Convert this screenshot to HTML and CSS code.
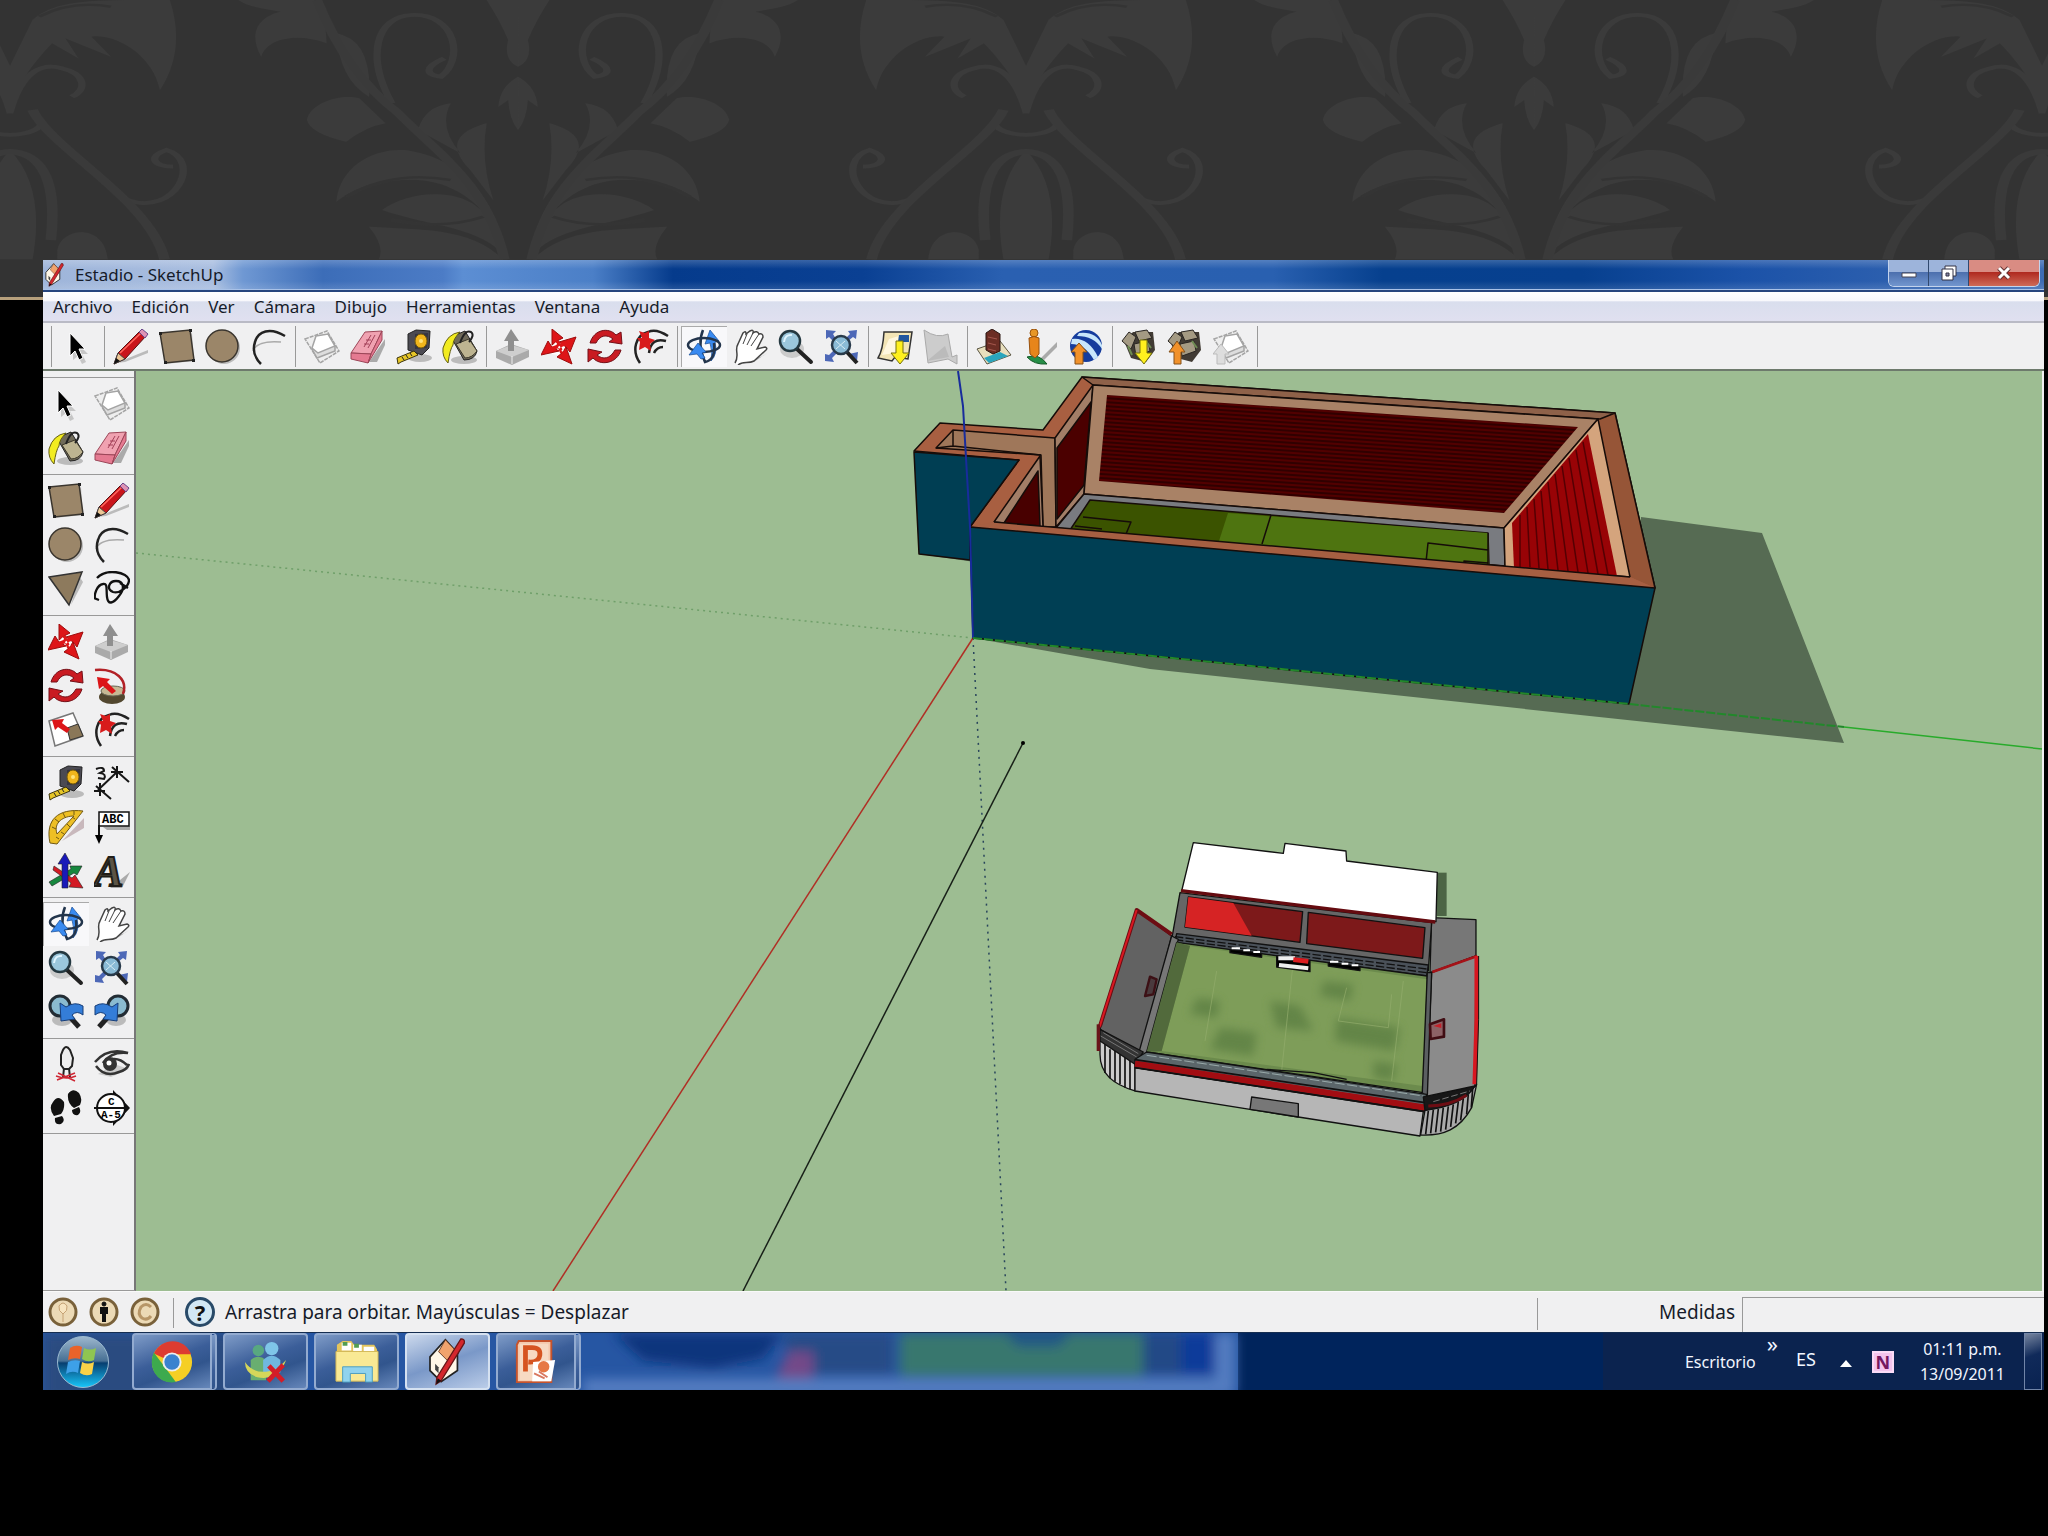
FILE: index.html
```html
<!DOCTYPE html>
<html lang="es">
<head>
<meta charset="utf-8">
<meta name="viewport" content="width=device-width, initial-scale=1">
<title>Estadio - SketchUp</title>
<link rel="stylesheet" href="styles.css">
</head>
<body>
<svg class="defs" aria-hidden="true">
<defs>
<symbol id="select" viewBox="0 0 36 36"><path d="M13 10v21l5-4 4 8 4-2-4-8h6z" fill="#aaa" opacity=".6"/><path d="M10 4v23l5-5 4 9 4-2-4-9h6z" fill="#000" stroke="#fff"/></symbol>
<symbol id="component" viewBox="0 0 36 36" fill="#fff" stroke="#a4a4a4" stroke-width="1.5"><path d="M1 10 23 2l12 20-19 12z" fill="#eee" stroke-dasharray="4 1"/><path d="m8 20 5 9 18-7v-6" fill="#ddd"/><path d="m12 7 12-2 7 12-17 7-6-5z"/></symbol>
<symbol id="bucket" viewBox="0 0 36 36"><ellipse cx="22" cy="31" rx="13" ry="4" fill="#bbb"/><path d="m9 8 14-6 12 20q-2 9-13 9z" fill="#6f6a59" stroke="#222"/><path d="m14 15 13-5 8 12q-5 7-12 7z" fill="#bdb491" stroke="#3b372b"/><path d="M1 19Q5 5 18 3q-7 7-7 13-3 4-5 18-6-6-5-15z" fill="#f2ec20" stroke="#645f14"/><path d="M18 14Q23 0 29 3q4 3-2 10" fill="none" stroke="#222" stroke-width="2"/></symbol>
<symbol id="eraser" viewBox="0 0 36 36"><path d="M19 33h8l8-17v-6z" fill="#aaa"/><path d="M1 24 15 3l17-1-11 23z" fill="#f0a2b1" stroke="#9c4658"/><path d="m1 24 20 1-3 9L1 30zM21 25 32 2v9L18 34z" fill="#e57a91" stroke="#9c4658"/><path d="m14 18 7-12m-3 13 7-13m-9 5h5m-7 4h5" stroke="#a24058" fill="none"/></symbol>
<symbol id="rectangle" viewBox="0 0 36 36"><path d="m7 35 28-3-2-28z" fill="#c4c4c4"/><path d="m1 4 30-3 4 30-29 3z" fill="#9b8669" stroke="#3a352e" stroke-width="1.5"/><path d="M0 3h3v3H0zM30 0h3v3h-3zM33 30h3v3h-3zM5 32h3v3H5z" fill="#222"/></symbol>
<symbol id="pencil" viewBox="0 0 36 36"><path d="m3 34 32-13v3L12 33z" fill="#bbb"/><path d="m1 35 4-11L27 2l6 5-21 23z" fill="#c9151b" stroke="#511"/><path d="M7 24 28 4" stroke="#ff6a60" stroke-width="1.5"/><path d="m1 35 4-11 7 6z" fill="#edc795" stroke="#444"/><path d="m1 35 2-6 4 3z" fill="#111"/><path d="m26 3 3-3 6 5-3 4z" fill="#df93b4" stroke="#648"/></symbol>
<symbol id="circle" viewBox="0 0 36 36"><circle cx="19" cy="19" r="16" fill="#bbb"/><circle cx="17" cy="17" r="16" fill="#9b8669" stroke="#3a352e" stroke-width="1.5"/></symbol>
<symbol id="arc" viewBox="0 0 36 36" fill="none"><path d="M2 22q4-11 28-9" stroke="#aaa" stroke-width="1.5"/><path d="M34 7C19-2 7 2 4 13c-3 9 0 16 6 22" stroke="#222" stroke-width="2.5"/></symbol>
<symbol id="polygon" viewBox="0 0 36 36"><path d="m23 34 12-23-4-6z" fill="#bbb"/><path d="m1 6 33-5-13 33z" fill="#8d7a5d" stroke="#333" stroke-width="1.5"/></symbol>
<symbol id="freehand" viewBox="0 0 36 36"><path d="M3 7C12-3 34 1 35 9c0 7-10 14-16 12-7-3-4-11 3-11 8 0 9 8 3 15-6 8-11 9-12 1-1-8 1-14-4-13-6 1-9 10-8 15m-1-1 5 2m21-17 8 5" fill="none" stroke="#111" stroke-width="2.3"/></symbol>
<symbol id="move" viewBox="0 0 36 36"><path d="m12 9 12 1 3 13-4 4-12-2-2-9z" fill="#fff"/><path d="m11 0 11 9-6 3-5 4zM35 8l-6 15-4-5-7-5zM31 35 16 28l5-4 4-6zM0 26l7-14 4 6 7 4z" fill="#de1518" stroke="#9c0c0c"/><path d="m16 12 5 12M10 20l16-6" stroke="#de1518" stroke-width="3.500"/><path d="m14 14 8 8" stroke="#fff" stroke-width="2" stroke-dasharray="2 3"/></symbol>
<symbol id="pushpull" viewBox="0 0 36 36"><path d="m1 22 15-7 18 6v7L17 36 1 29z" fill="#aaa"/><path d="m1 22 15-6 18 5-17 7z" fill="#cecece"/><path d="M17 27v8" stroke="#eee"/><path d="m16 0 8 12h-5v10h-6V12H9z" fill="#8f8f8f"/></symbol>
<symbol id="rotate" viewBox="0 0 36 36"><path d="M3 14C7 0 22-2 29 6l5-3 1 12-13-2 4-3c-6-5-13-4-17 4zM34 21c-4 14-21 16-28 8l-5 4V20l14 3-5 3c6 5 13 4 18-5z" fill="#c91b22" stroke="#731018"/></symbol>
<symbol id="followme" viewBox="0 0 36 36"><ellipse cx="18" cy="29" rx="13" ry="7" fill="#52472f"/><ellipse cx="19" cy="23" rx="12" ry="5" fill="#c6b894" stroke="#665"/><path d="M1 2C22 0 34 12 29 26" fill="none" stroke="#b22126" stroke-width="2.5"/><path d="m3 9 13 2-3 3 9 9-4 3-9-8-4 3z" fill="#dc1518"/></symbol>
<symbol id="scale" viewBox="0 0 36 36"><path d="M1 9 25 1l10 23L7 34z" fill="#fff" stroke="#777" stroke-width="1.5"/><path d="m19 16 11-4 5 12-13 4z" fill="#8a7758" stroke="#333"/><path d="m4 8 12-1-2 4 8 6-3 4-9-6-3 3z" fill="#dc1518"/></symbol>
<symbol id="offset" viewBox="0 0 36 36"><g fill="none" stroke="#222" stroke-width="2.5"><path d="M35 7Q23-1 15 3C3 6-2 21 7 34M33 12Q18 8 16 24m14-6q-6 0-9 6"/></g><path d="m6 2 6 2 4-2v7l6 2-5 4 1 7-6-4-6 3 1-8-3-4h5z" fill="#d81b1b"/></symbol>
<symbol id="tape" viewBox="0 0 36 36"><ellipse cx="24" cy="29" rx="12" ry="4" fill="#bbb"/><path d="m12 5 8-4 14 1-1 17-7 7-14-5z" fill="#4b4a52" stroke="#222"/><path d="m19 5 13-1-1 15-12 1z" fill="#353540"/><ellipse cx="25" cy="12" rx="6" ry="7" fill="#f0b51c" stroke="#765a08"/><circle cx="25" cy="12" r="2" fill="#ffe37a"/><path d="m1 29 17-7 4 4-17 7-3 2z" fill="#e6c627" stroke="#3b330c"/><path d="m6 28 2 3m2-5 2 3m2-5 2 3" stroke="#222"/></symbol>
<symbol id="dimension" viewBox="0 0 36 36" fill="none" stroke="#161616" stroke-width="2"><path d="m4 25 19-18M2 21l15 13M18 2l17 15M23 1v12M6 18v13M17 7h12M0 26h11M2 4q8-3 8 2L6 8q7 1 4 6l-6-1"/></symbol>
<symbol id="protractor" viewBox="0 0 36 36"><path d="m14 32 22-23v10z" fill="#c8b8bc"/><path d="M35 2C10-1-3 11 2 34l7 1zM26 7 9 25C5 13 16 7 26 7z" fill="#edbf25" stroke="#715914" fill-rule="evenodd"/><path d="m4 18 4 2M7 10l4 3m4-9 2 4m9-6v4M11 30l-3-2m8-3-3-2m9-5-3-3m8-5-3-2" stroke="#715914"/></symbol>
<symbol id="textlabel" viewBox="0 0 36 36"><path d="m9 18 27-1v4H13z" fill="#aaa"/><path d="M5 3h30v14H5z" fill="#fff" stroke="#111" stroke-width="1.5"/><path d="M5 16v13" stroke="#111" stroke-width="2"/><path d="m1 26 8 0-4 9z"/><text x="8" y="14" font-family="Liberation Mono" font-size="12" font-weight="700">ABC</text></symbol>
<symbol id="axes" viewBox="0 0 36 36" stroke="#222" stroke-width=".6"><path d="m1 29 22-13-1-3 12 0-5 9-3-2L4 33z" fill="#16873e"/><path d="m6 13 18 12 3-3 8 13-14-1 2-4L5 17z" fill="#d31a23"/><path d="M17 0 23 11h-3v24h-6V11h-4z" fill="#1919b9"/></symbol>
<symbol id="text3d" viewBox="0 0 36 36"><path d="m16 35 20-16-8 16z" fill="#aaa"/><text x="0" y="33" font-family="Liberation Serif" font-size="44" font-weight="700" font-style="italic" fill="#5b5445" stroke="#211e19" stroke-width="2">A</text></symbol>
<symbol id="orbit" viewBox="0 0 36 36"><path d="m24 1 9 11-4 1q3 12-4 19 2-9-1-18l-5 1z" fill="#398af0" stroke="#164b94" stroke-width=".7"/><g fill="none" stroke="#23354c" stroke-width="2.5"><ellipse cx="18" cy="16" rx="16" ry="7"/><path d="M17 1q-6 14 2 32 11-2 9-19"/></g><path d="m3 26 9-12 8 9-4 1 3 5-4 1-4-5z" fill="#398af0" stroke="#164b94" stroke-width=".7"/></symbol>
<symbol id="pan" viewBox="0 0 36 36"><path d="M9 34 22 33 35 24l-4 3z" fill="#aaa"/><path d="M3 34c5-8-1-13 3-19L11 4q3-3 3 1L18 2q4-2 3 2 4-3 6 1 4-1 4 3l-6 12 8-2q3 1 1 3L22 32c-6 3-11 0-16 4" fill="#fff" stroke="#444" stroke-width="1.5"/><path d="m11 15 4-10m0 11 6-12m-2 13 8-12" stroke="#444" fill="none"/></symbol>
<symbol id="zoom" viewBox="0 0 36 36"><ellipse cx="14" cy="20" rx="12" ry="9" fill="#bbb" opacity=".7"/><path d="m19 20 14 13" stroke="#222" stroke-width="4" stroke-linecap="round"/><circle cx="12" cy="12" r="10" fill="#9bc7dc" stroke="#243840" stroke-width="2.5"/><path d="M6 13q1-8 8-7" stroke="#dff5ff" stroke-width="2" fill="none"/></symbol>
<symbol id="extents" viewBox="0 0 36 36"><path d="m2 1 10 1-3 3 3 5-3 2-4-4-3 2zM24 2l9-1-1 9-3-2-5 4-2-3 4-4zM1 25l4 1 5-5 3 3-5 5 2 4-9-1zM25 25l9-2-1 9z" fill="#4d68b7"/><path d="m22 22 11 12" stroke="#222" stroke-width="4"/><circle cx="17" cy="16" r="9" fill="#8abbd6" stroke="#283a4a" stroke-width="2.5"/><path d="m12 12 9 8m0-8-9 8" stroke="#d7edf5"/></symbol>
<symbol id="previous" viewBox="0 0 36 36"><ellipse cx="14" cy="26" rx="10" ry="6" fill="#bbb"/><path d="m22 23 9 10" stroke="#222" stroke-width="5"/><circle cx="12" cy="12" r="10" fill="#8abbd0" stroke="#222c34" stroke-width="3"/><path d="m13 27-1-18 6 4q9-6 17-1v9q-6-5-11 0l3 4z" fill="#347dd8" stroke="#173e79"/></symbol>
<symbol id="getmap" viewBox="0 0 36 36"><path d="M7 3h28l-4 27-13-2-3 4-14-3q5-8 6-26z" fill="#f3e5b6" stroke="#333" stroke-width="1.500"/><path d="m12 10 10-3-4 17-13 2z" fill="#fff7df"/><path d="M22 6h10v7H21z" fill="#21569e"/><path d="M19 12h7v12h6l-9 11-9-11h5z" fill="#fff01e" stroke="#76720c"/></symbol>
<symbol id="terrain" viewBox="0 0 36 36"><path d="M1 1q13 9 24 4l4 23 5-2v9l-9-5-20 4z" fill="#ccc" stroke="#aaa"/><path d="m4 32 18-15 4 11z" fill="#bbb"/></symbol>
<symbol id="building" viewBox="0 0 36 36"><path d="m1 20 23-8 11 14-24 9z" fill="#e8dfbd" stroke="#5a5542"/><path d="m8 29 16-6 8 4-19 7z" fill="#29a5bd"/><path d="m10 4 6-4 8 5v17l-7 3-7-4z" fill="#6b2d24" stroke="#291510"/><path d="m12 8 9 2m-9 4 8 2m-8 4 8 2" stroke="#a5574d"/></symbol>
<symbol id="person" viewBox="0 0 36 36"><path d="M19 29 35 13v5L22 31z" fill="#aaa"/><path d="M5 28q12-4 20 7-13 1-20-7z" fill="#268e47" stroke="#145b28"/><circle cx="12" cy="4" r="4" fill="#e79625" stroke="#9a530d"/><path d="M7 9q5-3 10 0v16l-4 4-5-4z" fill="#e7851b" stroke="#97500e"/></symbol>
<symbol id="earth" viewBox="0 0 36 36"><circle cx="18" cy="17" r="16" fill="#153c9d"/><path d="M4 10Q20 8 30 28l-4 3Q17 15 3 15zM11 4q17-2 23 12v4Q26 7 9 7z" fill="#c8e6fb"/><path d="m11 14 8 9h-4v12H7V23H3z" fill="#f1912a" stroke="#83501a"/></symbol>
<symbol id="warehouse" viewBox="0 0 36 36"><path d="m3 12 9-9 20 0 2 18-9 12-15-4z" fill="#413b34"/><path d="m1 12 7-9 7 5-5 12zM14 3l12-2 5 8-13 3zM13 15l14-3 2 10-14 5z" fill="#a49a83" stroke="#292522"/><path d="m7 17 4 9m14-14 5 7" stroke="#6e8b52" stroke-width="2"/></symbol>
<symbol id="getmodels" viewBox="0 0 36 36"><use href="#warehouse"/><path d="M19 11h7v13h5l-8 11-9-11h5z" fill="#fff01e" stroke="#76720c"/></symbol>
<symbol id="sharemodel" viewBox="0 0 36 36"><use href="#warehouse"/><path d="m10 12 8 11h-4v12H7V23H2z" fill="#f1912a" stroke="#83501a"/></symbol>
<symbol id="sharecomponent" viewBox="0 0 36 36"><use href="#component"/><path d="m8 15 8 10h-4v10H4V25H0z" fill="#ddd" stroke="#bbb"/></symbol>
<symbol id="camera" viewBox="0 0 36 36"><path d="M15 4q3-6 7 0l3 8-1 8-3 3h-5l-3-4V9z" fill="#eee" stroke="#222" stroke-width="2"/><path d="m16 22-1 10m6-10 1 10" stroke="#222" stroke-width="2"/><path d="m10 27 17 8M27 27 9 34M8 30q11 4 20 0" fill="none" stroke="#ce2533" stroke-width="1.5"/></symbol>
<symbol id="look" viewBox="0 0 36 36"><path d="M4 28 17 31 35 23 20 18z" fill="#ccc"/><path d="M1 16Q14 1 34 7q-17-2-25 10 13-9 24 2M2 20q9 12 23 6 8-2 10-8" fill="none" stroke="#333" stroke-width="2.5"/><circle cx="16" cy="18" r="7" fill="#333"/><circle cx="15" cy="17" r="2.5" fill="#fff"/></symbol>
<symbol id="walk" viewBox="0 0 36 36" fill="#111"><path d="M5 12q5-8 11 0 1 7-3 12l-7 2Q0 18 5 12zM7 28l7-2q4 5-1 8-7 1-6-6zM20 4q5-7 11-1 4 6 1 12l-6 3q-7-5-6-14zM24 20l7-3q3 5-1 8-6 1-6-5z"/></symbol>
<symbol id="section" viewBox="0 0 36 36"><path d="M19 0 36 18 19 36z" fill="#111"/><circle cx="17" cy="18" r="14" fill="#fff" stroke="#111" stroke-width="2"/><path d="M0 18h34" stroke="#111" stroke-width="2"/><g font-family="Liberation Mono" font-size="11" font-weight="700"><text x="14" y="15">C</text><text x="7" y="28">A-5</text></g></symbol>
<symbol id="house" viewBox="0 0 46 56"><path d="m2 22 18-20 14 16v20L15 51 2 38z" fill="#fff7e8" stroke="#222" stroke-width="2"/><path d="M20 2 35 18 26 30 12 16z" fill="#f1a36d" stroke="#583120"/><path d="m8 30 4 4v7l-4-4z" fill="#444"/><path d="M38 1q5 0 4 5L15 50l-6 4 1-8z" fill="#d4272d" stroke="#651618" stroke-width="1.5"/><path d="m9 54 2-7 4 3z" fill="#111"/></symbol>
<pattern id="damask" x="10" y="0" width="1016" height="300" patternUnits="userSpaceOnUse">
<g transform="scale(.6534 .3333) translate(-15.5 0)"><g id="half" fill="#3b3b3b" stroke="none">
<path d="M515 100Q570 120 565 290 520 240 515 100zM365 0H480Q500 60 500 130C460 100 410 110 400 170 380 100 395 50 430 35 400 25 380 20 365 0zM470 360C475 310 520 280 550 295L590 370Q560 380 530 425 475 400 470 360zM515 605C520 500 570 445 620 450 690 470 740 550 765 690 730 600 690 545 640 540 570 535 540 570 515 605zM585 630C620 580 690 560 730 620 760 670 770 700 775 775 740 680 660 680 585 630zM565 680C640 690 720 680 770 778H580Q590 740 565 680zM640 390Q650 320 690 310 670 380 705 460zM745 370C690 400 690 450 720 510L755 600Q735 480 745 370zM745 0H793V200Q770 180 778 120 765 60 745 0zM793 230Q765 260 763 320L778 300Q780 360 793 390zM50 60C80 10 120 0 210 0H260Q285 150 245 270C235 170 180 100 140 110L170 170 100 115 120 175 80 130C60 170 20 260 15 340V200Q30 140 50 60zM15 450Q70 560 50 778H15zM88 750C95 680 160 670 165 778H88z"/>
<path d="M600 310C560 170 575 50 630 45 700 40 710 180 675 230 650 225 650 200 680 175M15 340C35 200 70 190 95 205 130 220 135 270 110 290M15 405Q60 400 65 365M195 600C270 650 310 480 255 450 225 470 235 500 265 500" fill="none" stroke="#3b3b3b" stroke-width="11"/>
<path d="M485 0C510 120 550 250 610 340 670 460 745 550 772 778M50 330C80 450 230 600 252 778M15 455C80 460 85 600 78 720" fill="none" stroke="#3a3a3a" stroke-width="16"/><path d="M60 50Q110 0 170 20M530 590Q600 510 690 540M600 660Q680 690 740 650" fill="none" stroke="#343434" stroke-width="8"/></g>
<use href="#half" transform="translate(1586 0) scale(-1 1)"/></g>
</pattern>
<pattern id="rows" width="40" height="8" patternUnits="userSpaceOnUse" patternTransform="rotate(3.9)"><path d="M0 0h40v8H0z" fill="#520000"/><path d="M0 1h40M0 5h40" stroke="#300000" stroke-width="2"/></pattern>
<filter id="soft"><feGaussianBlur stdDeviation="6"/></filter>
<filter id="grass"><feGaussianBlur stdDeviation="14"/></filter>
</defs>
</svg>

<div class="slide">
<div class="wallpaper" aria-hidden="true"><svg><rect width="100%" height="300" fill="#333"/><rect width="100%" height="300" fill="url(#damask)"/></svg></div>

<main class="desktop">
<section class="window">
<header class="titlebar">
<svg class="title-icon" viewBox="0 0 46 56"><use href="#house"/></svg>
<h1>Estadio - SketchUp</h1>
<div class="controls">
<button aria-label="Minimizar"><svg viewBox="0 0 20 16"><path d="M3 8h14v4H3z" fill="#fff" stroke="#445"/></svg></button>
<button aria-label="Restaurar"><svg viewBox="0 0 20 16"><path d="M6 1h11v10H6z" fill="#fff" stroke="#334"/><path d="M3 4h11v11H3z" fill="#fff" stroke="#334"/><path d="M7 8h3v3H7z" fill="#88a" stroke="#334"/></svg></button>
<button class="close" aria-label="Cerrar"><svg viewBox="0 0 20 16"><path d="m5 3 10 10M15 3 5 13" stroke="#633" stroke-width="5"/><path d="m5 3 10 10M15 3 5 13" stroke="#fff" stroke-width="3"/></svg></button>
</div>
</header>
<nav class="menu"><button>Archivo</button><button>Edición</button><button>Ver</button><button>Cámara</button><button>Dibujo</button><button>Herramientas</button><button>Ventana</button><button>Ayuda</button></nav>
<div class="toolbar">
<div class="group"><button aria-label="Seleccionar"><svg><use href="#select"/></svg></button></div>
<div class="group"><button aria-label="Línea"><svg><use href="#pencil"/></svg></button><button aria-label="Rectángulo"><svg><use href="#rectangle"/></svg></button><button aria-label="Círculo"><svg><use href="#circle"/></svg></button><button aria-label="Arco"><svg><use href="#arc"/></svg></button></div>
<div class="group"><button aria-label="Crear componente"><svg><use href="#component"/></svg></button><button aria-label="Borrar"><svg><use href="#eraser"/></svg></button><button aria-label="Medir"><svg><use href="#tape"/></svg></button><button aria-label="Pintar"><svg><use href="#bucket"/></svg></button></div>
<div class="group"><button aria-label="Empujar/tirar"><svg><use href="#pushpull"/></svg></button><button aria-label="Mover"><svg><use href="#move"/></svg></button><button aria-label="Rotar"><svg><use href="#rotate"/></svg></button><button aria-label="Equidistancia"><svg><use href="#offset"/></svg></button></div>
<div class="group"><button class="active" aria-label="Orbitar"><svg><use href="#orbit"/></svg></button><button aria-label="Desplazar"><svg><use href="#pan"/></svg></button><button aria-label="Zoom"><svg><use href="#zoom"/></svg></button><button aria-label="Ver modelo"><svg><use href="#extents"/></svg></button></div>
<div class="group"><button aria-label="Obtener vista"><svg><use href="#getmap"/></svg></button><button aria-label="Terreno"><svg><use href="#terrain"/></svg></button></div>
<div class="group"><button aria-label="Añadir edificio"><svg><use href="#building"/></svg></button><button aria-label="Texturas"><svg><use href="#person"/></svg></button><button aria-label="Google Earth"><svg><use href="#earth"/></svg></button></div>
<div class="group"><button aria-label="Obtener modelos"><svg><use href="#getmodels"/></svg></button><button aria-label="Compartir modelo"><svg><use href="#sharemodel"/></svg></button><button aria-label="Compartir componente"><svg><use href="#sharecomponent"/></svg></button></div>
</div>

<div class="workspace">
<aside class="palette">
<div class="tools"><button aria-label="Seleccionar"><svg><use href="#select"/></svg></button><button aria-label="Crear componente"><svg><use href="#component"/></svg></button><button aria-label="Pintar"><svg><use href="#bucket"/></svg></button><button aria-label="Borrar"><svg><use href="#eraser"/></svg></button></div>
<div class="tools"><button aria-label="Rectángulo"><svg><use href="#rectangle"/></svg></button><button aria-label="Línea"><svg><use href="#pencil"/></svg></button><button aria-label="Círculo"><svg><use href="#circle"/></svg></button><button aria-label="Arco"><svg><use href="#arc"/></svg></button><button aria-label="Polígono"><svg><use href="#polygon"/></svg></button><button aria-label="A mano alzada"><svg><use href="#freehand"/></svg></button></div>
<div class="tools"><button aria-label="Mover"><svg><use href="#move"/></svg></button><button aria-label="Empujar/tirar"><svg><use href="#pushpull"/></svg></button><button aria-label="Rotar"><svg><use href="#rotate"/></svg></button><button aria-label="Sígueme"><svg><use href="#followme"/></svg></button><button aria-label="Escala"><svg><use href="#scale"/></svg></button><button aria-label="Equidistancia"><svg><use href="#offset"/></svg></button></div>
<div class="tools"><button aria-label="Medir"><svg><use href="#tape"/></svg></button><button aria-label="Acotaciones"><svg><use href="#dimension"/></svg></button><button aria-label="Transportador"><svg><use href="#protractor"/></svg></button><button aria-label="Texto"><svg><use href="#textlabel"/></svg></button><button aria-label="Ejes"><svg><use href="#axes"/></svg></button><button aria-label="Texto 3D"><svg><use href="#text3d"/></svg></button></div>
<div class="tools"><button class="active" aria-label="Orbitar"><svg><use href="#orbit"/></svg></button><button aria-label="Desplazar"><svg><use href="#pan"/></svg></button><button aria-label="Zoom"><svg><use href="#zoom"/></svg></button><button aria-label="Ver modelo"><svg><use href="#extents"/></svg></button><button aria-label="Anterior"><svg><use href="#previous"/></svg></button><button aria-label="Siguiente"><svg class="flip"><use href="#previous"/></svg></button></div>
<div class="tools"><button aria-label="Situar cámara"><svg><use href="#camera"/></svg></button><button aria-label="Girar"><svg><use href="#look"/></svg></button><button aria-label="Caminar"><svg><use href="#walk"/></svg></button><button aria-label="Plano de sección"><svg><use href="#section"/></svg></button></div>
</aside>

<svg class="scene" viewBox="136 370 1906 920" role="img" aria-label="Modelo del estadio">
<path d="M136 370h1906v920H136z" fill="#9dbd92"/>
<path d="M973 637 1150 668 1844 742 1762 532 1641 516 1629 703z" fill="#566b53"/>
<path d="M919 553 968 560 980 562 960 548z" fill="#566b53"/>
<g stroke-width="1.5" fill="none"><path d="m136 552 837 85" stroke="#6f9f69" stroke-dasharray="2 4"/><path d="m973 637 33 653" stroke="#29455c" stroke-dasharray="2 5"/><path d="M973 637 553 1290" stroke="#b02f25"/><path d="M1023 742 743 1290" stroke="#182018"/><path d="M1844 726 2042 748" stroke="#28ab2b"/></g><circle cx="1023" cy="742" r="2"/>
<g stroke="#160c09" stroke-width="1.5" stroke-linejoin="round">
<path d="M914 450 940 422 1043 429 1082 376 1615 412 1655 587 970 526 1019 459z" fill="#a85f41"/>
<path d="M1615 412 1655 587 1630 576 1598 418z" fill="#965537" stroke="none"/><path d="M1615 412 1655 587" fill="none"/>
<path d="M1082 376 1615 412 1600 418 1093 384z" fill="#8e6149"/>
<path d="M914 451 1019 459 970 526 970 559 919 553z" fill="#003e53"/>
<path d="M936 447 953 429 1055 437 1056 526 1043 526 1041 454z" fill="#9f775a"/>
<path d="M936 447 953 445 1041 454M953 429v16" fill="none"/>
<path d="M1055 437 1093 384 1084 493 1056 526z" fill="#a27e67"/><path d="M1057 447 1091 401 1084 484 1057 518z" fill="#4b0000"/>
<path d="M994 521 1040 455 1043 526z" fill="#a27e67"/><path d="M1004 522 1038 470 1040 525z" fill="#480000"/>
<path d="M1093 384 1598 418 1504 527 1084 493z" fill="#a98266"/>
<path d="M1107 394 1578 426 1504 512 1099 480z" fill="url(#rows)" stroke="none"/>
<path d="M1084 493 1504 527 1505 565 1056 527z" fill="#797b80"/>
<path d="M1090 499 1488 532 1489 565 1070 529z" fill="#3b5300"/><path d="m1228 512 260 20 1 33-271-22z" fill="#4e7410" stroke="none"/>
<path d="M1271 514 1262 543M1083 516l48 5-5 12M1075 525l27 3M1426 561l2-19 60 7M1464 565v-5l24 2M1488 532v32" fill="none"/>
<path d="M1598 418 1630 576 1505 566 1504 527z" fill="#d4a47d"/><path d="M1588 433 1617 575 1514 567 1512 522z" fill="#980306" stroke="none"/>
<path d="M1520 514v52M1527 506l3 60M1534 498l5 69M1541 490l7 78M1548 481l10 88M1555 473l13 97M1562 465l16 106M1569 457l19 115M1576 449l22 124M1583 441l25 133" stroke="#550003"/>
<path d="M970 526 994 521 1630 576 1655 587z" fill="#a65f42" stroke="none"/><path d="M994 521 1630 576" fill="none"/>
<path d="M970 526 1655 587 1629 703 973 637z" fill="#003f54"/></g>
<path d="m958 370 5 35 7 121 3 111" fill="none" stroke="#182c9c" stroke-width="2"/>
<path d="M973 637 1629 703 1844 726" fill="none" stroke="#22882b" stroke-width="2" stroke-dasharray="9 2"/>

<g transform="translate(1080 820) scale(.3333)" stroke="#111" stroke-width="4" stroke-linejoin="round">
<path d="M1070 155h30v130h-30z" fill="#4c6545" stroke="none"/>
<path d="M1055 290 1188 296V405L1050 455z" fill="#777"/>
<path d="M300 215 1055 305 1045 450 275 355z" fill="#666"/>
<path d="M325 228 668 272 660 364 315 318z" fill="#7d191a"/><path d="M325 228 460 246 515 344 315 318z" fill="#d62324" stroke="none"/><path d="M685 274 1035 320 1028 412 680 368z" fill="#7d191a"/>
<path d="M290 338 1045 432 1040 465 285 365z" fill="#4a5159"/><path d="M285 347 1040 444M285 356 1040 455" fill="none" stroke-dasharray="25 7"/>
<path d="M340 65 610 97 615 67 798 90 800 120 1072 154 1068 302 305 210z" fill="#fff"/><path d="M303 209 1066 303" stroke="#650b10" stroke-width="10"/>
<path d="M170 267 275 345 185 700 60 625z" fill="#626262"/><path d="M275 340 170 267 60 615" fill="none" stroke="#6d0d13" stroke-width="12"/><path d="M170 267 58 620" stroke="#d91821" stroke-width="6"/>
<path d="M275 345 295 355 200 705 175 700z" fill="#777"/>
<path d="M290 364 1042 465 1030 815 200 693z" fill="#6c8b4d"/><path d="M330 375 1040 475 1028 795 245 690z" fill="#7e9d59" stroke="none"/><path d="M290 364 330 375 245 690 200 693z" fill="#526a3c" stroke="none"/>
<g stroke="none" fill="#597b40" opacity=".7" filter="url(#grass)"><path d="M570 540 660 555 700 630 590 620zM420 620l110 15-10 70-130-20zM770 590l190 30-15 70-180-30zM880 720l70 10-10 50-60-10zM730 480l90 10-10 50-90-15zM350 530l70 10-10 50-80-10z"/></g>
<g fill="none" stroke="#92ac6b" stroke-width="3" opacity=".7"><path d="m640 420-35 330M410 450l-35 210M800 500l-25 100 150 20 10-100M970 480l-35 300"/></g>
<path d="M450 385l95 12v12l-95-14zM745 425l95 12v12l-95-14zM590 405l100 15v32l-100-14z"/><path d="M455 382h25m10 6h20m10 5h20M750 422h25m10 6h20m10 5h20" stroke="#fff" stroke-width="6"/><path d="M595 412h50M597 432l88 10" stroke="#eee" stroke-width="12"/><path d="M640 416l45 5" stroke="#d91b20" stroke-width="14"/>
<path d="M195 525 210 467 230 475 220 520z" fill="#4a3a3d" stroke="#3c1015" stroke-width="7"/>
<path d="M1055 455 1188 405 1185 800 1040 830z" fill="#8b8b8b"/><path d="M1042 455 1055 455 1042 830 1027 815z" fill="#5b5f61"/>
<path d="M1057 453 1192 405" stroke="#a51218" stroke-width="8"/><path d="M1190 405V595L1184 790" fill="none" stroke="#d81720" stroke-width="13"/><path d="M1196 405V595L1190 790" fill="none" stroke-width="3"/>
<path d="M1050 610 1092 595v52l-40 7z" fill="#8c6266" stroke="#400d13" stroke-width="8"/><path d="M1060 615l24-8v14z" fill="#c4212a" stroke="none"/>
<path d="M60 640 165 715V810C100 790 60 760 60 700z" fill="#ccc"/><path d="M75 668v88M90 685v87M105 690v92M120 700v90M135 705v95M150 712v93" stroke-width="5"/>
<path d="M60 625 190 693 165 730 60 660z" fill="#333"/><path d="M55 610v80" stroke="#69141a" stroke-width="10"/><path d="M62 645 170 708M70 635 175 698" stroke="#999" stroke-width="2"/>
<path d="M165 740 1030 872 1020 945 655 888 510 865 165 810z" fill="#b6b6b6"/><path d="M515 828 655 848V888L510 865z" fill="#777"/>
<path d="M165 715 200 693 1040 820 1035 870 165 740z" fill="#5b666a"/><path d="M165 728 1035 860" stroke="#a20d12" stroke-width="19"/><path d="M165 716 1035 845M165 740 1035 872" fill="none" stroke-width="5"/><path d="M200 703 1030 825" stroke="#9aa" stroke-width="3" stroke-dasharray="30 8"/>
<path d="M560 745 700 755 800 775" fill="none"/>
<path d="M1035 868C1090 860 1150 840 1190 790L1175 860C1140 925 1090 945 1022 942z" fill="#aaa"/><path d="M1045 870l-8 70M1060 867l-8 70M1075 864l-8 70M1090 860l-8 72M1105 856l-8 70M1120 850l-8 68M1135 842l-8 65M1150 833l-8 65M1165 820l-5 60M1178 805l-4 55" stroke-width="5"/><path d="M1030 828 1185 795Q1150 855 1035 868z" fill="#171717"/><path d="M1045 855Q1110 855 1160 823" fill="none" stroke="#6d0d13" stroke-width="9"/><path d="M1060 842 1170 810" stroke="#aaa" stroke-width="2" stroke-dasharray="20 8"/>
</g>
</svg>
</div>

<footer class="status">
<svg class="badge gold" viewBox="0 0 30 30"><circle cx="15" cy="15" r="13"/><path d="M15 17v8m-4-16q4-6 8 0 1 5-4 8-5-3-4-8z" fill="#f7e4bf" stroke="#c5a275"/></svg>
<svg class="badge gold" viewBox="0 0 30 30"><circle cx="15" cy="15" r="13"/><circle cx="15" cy="7" r="2"  class="figure"/><path d="M11 10h8v7h-2v8h-4v-8h-2z" fill="#111"/></svg>
<svg class="badge gold" viewBox="0 0 30 30"><circle cx="15" cy="15" r="13"/><path d="M21 10q-5-5-10 0-4 7 1 11 5 3 9-2" fill="none" stroke="#b79667" stroke-width="3"/></svg>
<span class="divider"></span>
<button class="help" aria-label="Ayuda">?</button>
<p>Arrastra para orbitar. Mayúsculas = Desplazar</p>
<label for="medidas">Medidas</label><input id="medidas" type="text">
</footer>
</section>

<div class="taskbar">
<svg class="glass" viewBox="0 0 2001 58" preserveAspectRatio="none" aria-hidden="true"><path d="M0 0h2001v58H0z" fill="#00245c"/><path d="M1560 0h441v58h-441z" fill="#0b234f"/><path d="M0 0h1195v58H0z" fill="#2656a3"/><g filter="url(#soft)"><path d="M0 0h200v70H0z" fill="#294c80"/><path d="M570 0h170l-20 26-50 10-70-8z" fill="#0a357d"/><path d="M740 0h110v42h-100z" fill="#264c86"/><path d="M857 0h243v44H857z" fill="#37776e"/><path d="M955-6h80l-20 20h-40z" fill="#235785"/><path d="M1100 0h38v42h-38z" fill="#204a86"/><path d="M1138 0h35v42h-35z" fill="#073b9a"/><path d="M540 46h650v20H540zM1172 0h20v60h-20z" fill="#527bc0"/><path d="M733 46l12-27h25v27z" fill="#734a88"/></g></svg>
<button class="start" aria-label="Inicio"><svg viewBox="0 0 54 54"><defs><linearGradient id="orb" x2="0" y2="1"><stop stop-color="#9eb8ce"/><stop offset=".48" stop-color="#466f94"/><stop offset=".52" stop-color="#073e70"/><stop offset="1" stop-color="#18c7fb"/></linearGradient></defs><circle cx="27" cy="27" r="25.500" fill="url(#orb)" stroke="#9bbad0"/><path d="M14 13q6-4 12-1l-2 12q-6-2-12 1z" fill="#e9632a"/><path d="M28 13q6 3 12 0l-2 12q-6 3-12-1z" fill="#8fc551"/><path d="M12 27q6-3 12-1l-2 12q-6-3-12 1z" fill="#3da0e8"/><path d="M26 27q6 3 12 0l-2 12q-6 3-12-1z" fill="#fbd248"/></svg></button>
<div class="apps">
<button class="stack" aria-label="Chrome"><svg viewBox="0 0 46 46"><circle cx="23" cy="23" r="21" fill="#f5cf24"/><path d="M23 23 4 14C13-4 37-2 43 15H23z" fill="#dd3c31"/><path d="M4 13 16 29 27 44C8 47-3 29 4 13z" fill="#3daa4e"/><circle cx="23" cy="23" r="10" fill="#eee"/><circle cx="23" cy="23" r="8" fill="#3a82cf"/></svg></button>
<button aria-label="Messenger"><svg viewBox="0 0 46 46"><circle cx="15" cy="11" r="6" fill="#58a880"/><path d="M7 42V21q8-7 16 0v21z" fill="#69ae70"/><circle cx="29" cy="9" r="7" fill="#7fc5e8"/><path d="M20 34V21q9-9 18 0v13z" fill="#70b7df"/><path d="M1 23q11 16 34 7l9-9q-8 22-30 18Q1 35 1 23z" fill="#d5d65a"/><path d="m26 27 15 16m0-17L25 43" stroke="#d31d28" stroke-width="5"/></svg></button>
<button aria-label="Explorador"><svg viewBox="0 0 46 46"><path d="M2 5 8 1h9l3 4h21l3 5v31H2z" fill="#e4c45c"/><path d="M7 3h10v8H7zM19 5h9v7h-9zM30 7h11v6H30z" fill="#fff"/><path d="M8 2h5v4H8zM20 4h5v4h-5z" fill="#539d52"/><path d="M1 12h44v31H1z" fill="#f9e994" stroke="#d2b756"/><path d="M8 44V28h31v16h-7v-9H16v9z" fill="#90d3ee" stroke="#4a9cbe"/></svg></button>
<button class="current" aria-label="SketchUp"><svg viewBox="0 0 46 56"><use href="#house"/></svg></button>
<button class="stack" aria-label="PowerPoint"><svg viewBox="0 0 46 46"><path d="M5 1h34v43H3V5z" fill="#f4c9ad" stroke="#c6532c" stroke-width="2"/><path d="M6 4h30v38H6z" fill="#f7dac3"/><path d="M12 33V8h7q9 0 8 8-1 8-12 7" fill="none" stroke="#d65420" stroke-width="5"/><path d="m20 23 23-2-4 22H19z" fill="#fff"/><circle cx="31" cy="28" r="6" fill="#e67846"/><path d="m21 35 11 5m-6-7 9 6" stroke="#d97861" stroke-width="2"/></svg></button>
</div>
<div class="tray">
<span>Escritorio</span><button class="more" aria-label="Más">»</button><span class="lang">ES</span>
<button class="up" aria-label="Iconos ocultos"><svg viewBox="0 0 12 7"><path d="m0 7 6-7 6 7z" fill="#fff"/></svg></button>
<span class="note">N</span>
<time datetime="2011-09-13T13:11">01:11 p.m.<br>13/09/2011</time>
<button class="peek" aria-label="Mostrar escritorio"></button>
</div>
</div>
</main>
</div>
</body>
</html>
```
FILE: styles.css
```css
* { box-sizing: border-box; }
body { margin: 0; background: #000; color: #161b29; font: 17px/24px "Noto Sans", "Open Sans", sans-serif; }
button { margin: 0; padding: 0; border: 0; background: none; color: inherit; font: inherit; }
svg { display: block; }
.defs { position: absolute; width: 0; height: 0; }
.slide { min-height: 100vh; background: #000; }
.wallpaper { height: 300px; overflow: hidden; background: #333; border-bottom: 3px solid #b7a07c; }
.wallpaper svg { width: 100%; height: 300px; }
.desktop { position: relative; margin: -40px 4px 0 43px; }
.window { background: #f0f0f1; }

.titlebar { display: flex; align-items: center; height: 32px; padding-left: 2px; border-bottom: 2px solid #27467e; box-shadow: inset 0 -1px #a9c2e8; background: linear-gradient(#fff3, #fff0 30%, #fff0 70%, #fff2), linear-gradient(90deg, #9eb5da 0, #a9bee0 170px, #6f98d3 200px, #3c6db8 280px, #4c7cc6 400px, #5c8ed3 420px, #4b7fc7 550px, #053b8c 630px, #0a4093 820px, #2a60b1 960px, #2960b0 1230px, #06408e 1340px, #07408f 1540px, #1b52a8 1700px, #3e6db5 100%); }
.title-icon { width: 20px; height: 26px; }
.titlebar h1 { flex: 1; margin: 0; padding-left: 10px; font-size: 17px; font-weight: 400; line-height: 28px; }
.controls { display: flex; align-self: flex-start; height: 27px; margin-right: 4px; border: 1px solid #c3d3ec; border-top: 0; border-radius: 0 0 6px 6px; overflow: hidden; }
.controls button { display: grid; place-items: center; width: 40px; border-right: 1px solid #30496f; background: linear-gradient(#9db4db 45%, #4d70ae 48%, #7296ce); }
.controls .close { width: 70px; border: 0; background: linear-gradient(#d98c83 45%, #b02a20 48%, #ce6a57); }
.controls svg { width: 20px; height: 16px; }

.menu { display: flex; gap: 19px; height: 31px; padding-left: 10px; border-bottom: 2px solid #b9bac5; background: linear-gradient(#fff 0, #f8f8fc 30%, #d9deed 34%, #e0e0f0); }
.menu button { height: 29px; line-height: 29px; }

.toolbar { display: flex; height: 48px; padding: 3px 0 2px 8px; border-bottom: 2px solid #6d7a6c; background: #f0f0f1; }
.group { display: flex; padding: 0 3px; border-right: 1px solid #999; }
.group:first-child { border-left: 1px solid #999; }
.group button, .tools button { display: grid; place-items: center; }
.group button { width: 46px; }
.group svg, .tools svg { width: 36px; height: 36px; }
.active { background: #f8f8fa; box-shadow: inset 1px 1px #aaa; }
.flip { transform: scaleX(-1); }

.workspace { display: grid; grid-template-columns: 93px 1fr; padding-right: 2px; }
.palette { padding-top: 6px; border-right: 2px solid #777; border-bottom: 1px solid #999; background: #f0f0f1; }
.tools { display: grid; grid-template-columns: 46px 45px; grid-auto-rows: 44px; padding: 4px 0; border-top: 1px solid #999; }
.tools:last-child { padding: 3px 0; border-bottom: 1px solid #999; }
.scene { width: 100%; height: auto; }

.status { display: flex; align-items: center; height: 41px; padding-left: 5px; border-top: 1px solid #f9f9f9; background: #f0f0f1; font-size: 19px; }
.badge { width: 30px; height: 30px; margin-right: 11px; }
.gold circle { fill: #ecdab6; stroke: #79613a; stroke-width: 3; }
.gold .figure { fill: #111; stroke: #111; stroke-width: 1; }
.divider { align-self: stretch; width: 1px; margin: 6px 11px 4px 2px; background: #999; }
.help { width: 30px; height: 30px; border: 3px solid #294a68; border-radius: 50%; background: #d3e8f4; color: #111; font-size: 22px; font-weight: 700; line-height: 24px; }
.status p { flex: 1; margin: 0; padding-left: 10px; line-height: 32px; }
.status label { align-self: stretch; width: 205px; margin: 6px 0 2px; padding-right: 7px; border-left: 1px solid #999; text-align: right; line-height: 28px; }
.status input { align-self: stretch; width: 302px; margin-top: 5px; padding: 0 8px; border: 1px solid #999; border-width: 1px 0 0 1px; background: #f0f0f1; font: inherit; }

.taskbar { position: relative; display: flex; height: 58px; border-top: 1px solid #152d50; color: #f2f6ff; }
.glass { position: absolute; inset: 0; width: 100%; height: 100%; }
.start, .apps, .tray { position: relative; }
.start { width: 89px; padding-left: 13px; }
.start svg { width: 54px; height: 54px; }
.apps { display: flex; gap: 6px; }
.apps button { display: grid; place-items: center; width: 85px; border: 2px solid #93abd0; border-radius: 4px; background: linear-gradient(160deg, #7e9bc7, #3b5e99 45%, #31558d 65%, #6687ba); }
.apps .stack { border-right: 7px double #93abd0; }
.apps .current { background: linear-gradient(160deg, #cbd8ec, #7a98c8 50%, #bacce8); border-color: #d5e1f1; }
.apps svg { width: 44px; height: 44px; }
.apps .current svg { height: 48px; }
.tray { display: flex; align-items: center; margin-left: auto; font-size: 16px; }
.more { align-self: flex-start; padding: 0 18px 0 11px; font-size: 22px; line-height: 20px; }
.lang { padding-bottom: 6px; font-size: 18px; }
.up { padding: 4px 20px 0 24px; }
.up svg { width: 12px; height: 7px; }
.note { width: 22px; height: 22px; background: #f4c4ed; color: #75175f; border: 2px solid #fbdcf7; font-size: 18px; font-weight: 700; line-height: 18px; text-align: center; }
time { padding: 0 19px 0 26px; line-height: 25px; text-align: center; }
.peek { align-self: stretch; width: 18px; margin-right: 2px; border: 1px solid #7185a8; background: linear-gradient(160deg, #76859f, #102a5a 40%, #092250); }
```
